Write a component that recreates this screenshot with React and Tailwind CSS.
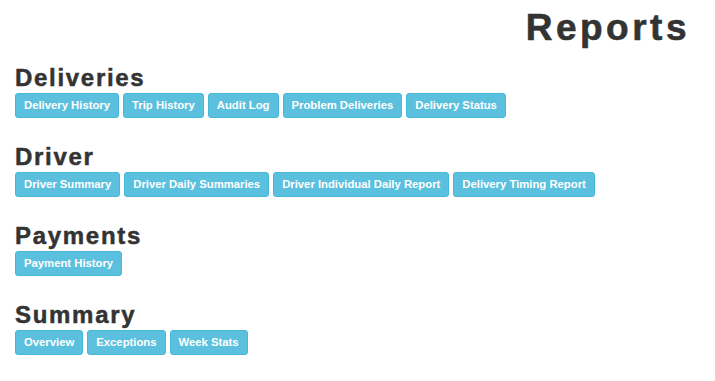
const sections = [
  {
    title: "Deliveries",
    links: ["Delivery History", "Trip History", "Audit Log", "Problem Deliveries", "Delivery Status"],
  },
  {
    title: "Driver",
    links: ["Driver Summary", "Driver Daily Summaries", "Driver Individual Daily Report", "Delivery Timing Report"],
  },
  { title: "Payments", links: ["Payment History"] },
  { title: "Summary", links: ["Overview", "Exceptions", "Week Stats"] },
];

function ReportButton({ label }) {
  return (
    <a
      href="#"
      className="rounded-[3px] border border-[#46b8da] bg-[#5bc0de] px-2 py-[4px] text-[11.3px] leading-[15px] font-bold text-white"
    >
      {label}
    </a>
  );
}

export default function App() {
  return (
    <div className="min-h-screen bg-white pl-[15px] pr-[25px] pt-[6px] font-['Liberation_Sans',Arial,sans-serif] text-[#333]">
      <h1 className="mb-[15px] text-right text-[37px] leading-[44px] font-bold tracking-[3.5px] [-webkit-text-stroke:0.6px_#333]">
        Reports
      </h1>
      <div className="flex flex-col gap-[26px]">
        {sections.map((section) => (
          <section key={section.title}>
            <h2 className="text-[24px] leading-[26px] font-bold tracking-[1.7px] [-webkit-text-stroke:0.5px_#333]">
              {section.title}
            </h2>
            <div className="mt-[2px] flex flex-wrap gap-[4px]">
              {section.links.map((label) => (
                <ReportButton key={label} label={label} />
              ))}
            </div>
          </section>
        ))}
      </div>
    </div>
  );
}
